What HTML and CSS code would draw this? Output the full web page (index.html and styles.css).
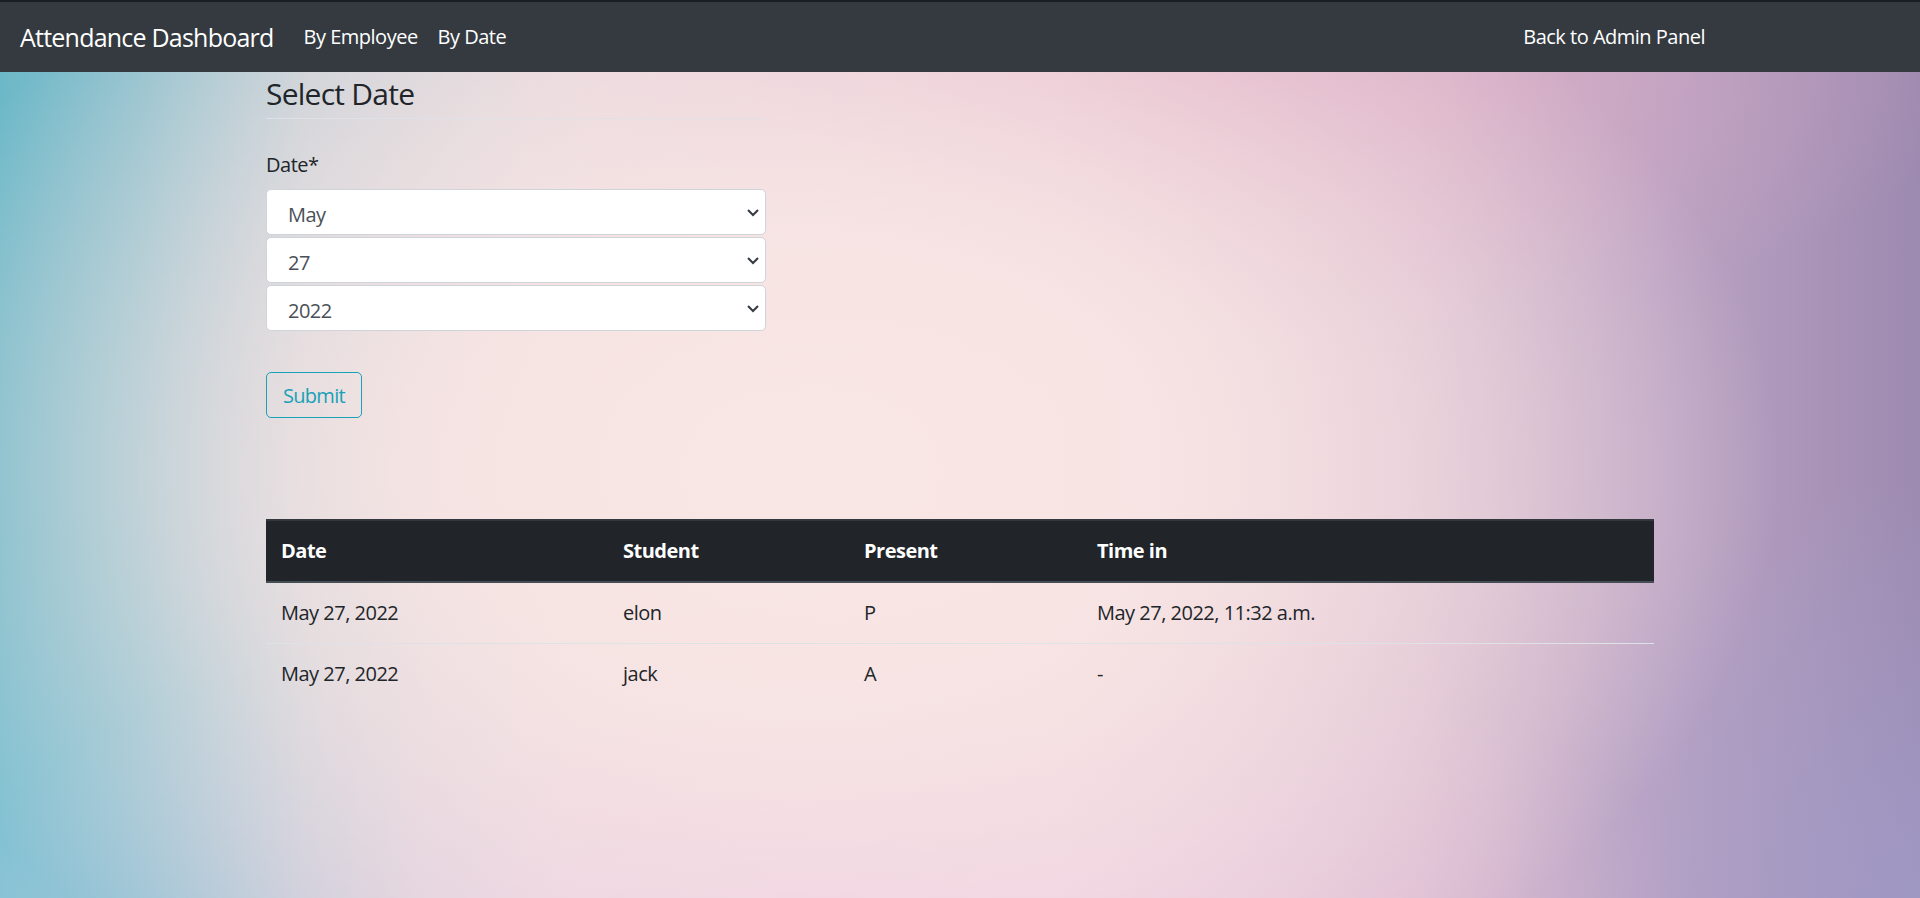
FILE: index.html
```html
<!DOCTYPE html>
<html lang="en">
<head>
<meta charset="utf-8">
<title>Attendance Dashboard</title>
<link rel="stylesheet" href="styles.css">
</head>
<body>
<header class="navbar">
  <a class="brand" href="#">Attendance Dashboard</a>
  <nav class="nav-main">
    <a class="nav-link" href="#">By Employee</a>
    <a class="nav-link" href="#">By Date</a>
  </nav>
  <nav class="nav-right">
    <a class="nav-link" href="#">Back to Admin Panel</a>
  </nav>
</header>

<main class="container">
  <section class="form-col">
    <h4 class="section-title">Select Date</h4>
    <form class="date-form">
      <label class="field-label">Date*</label>
      <div class="select-group">
        <div class="select-wrap">
          <select class="date-select"><option>May</option></select>
          <svg class="chev" width="14" height="10" viewBox="0 0 14 10"><path d="M2 3 L7 8 L12 3" fill="none" stroke="#343a40" stroke-width="2"/></svg>
        </div>
        <div class="select-wrap">
          <select class="date-select"><option>27</option></select>
          <svg class="chev" width="14" height="10" viewBox="0 0 14 10"><path d="M2 3 L7 8 L12 3" fill="none" stroke="#343a40" stroke-width="2"/></svg>
        </div>
        <div class="select-wrap">
          <select class="date-select"><option>2022</option></select>
          <svg class="chev" width="14" height="10" viewBox="0 0 14 10"><path d="M2 3 L7 8 L12 3" fill="none" stroke="#343a40" stroke-width="2"/></svg>
        </div>
      </div>
      <button type="button" class="btn-submit">Submit</button>
    </form>
  </section>

  <table class="att-table">
    <thead>
      <tr>
        <th class="c-date">Date</th>
        <th class="c-student">Student</th>
        <th class="c-present">Present</th>
        <th class="c-time">Time in</th>
      </tr>
    </thead>
    <tbody>
      <tr>
        <td>May 27, 2022</td>
        <td>elon</td>
        <td>P</td>
        <td>May 27, 2022, 11:32 a.m.</td>
      </tr>
      <tr>
        <td>May 27, 2022</td>
        <td>jack</td>
        <td>A</td>
        <td>-</td>
      </tr>
    </tbody>
  </table>
</main>
</body>
</html>
```

FILE: styles.css
```css
* { box-sizing: border-box; }

html, body {
  margin: 0;
  padding: 0;
}

body {
  min-height: 898px;
  font-family: "Open Sans", "Noto Sans", sans-serif;
  font-size: 20px;
  line-height: 1.5;
  letter-spacing: -0.025em;
  color: #212529;
  background:
    radial-gradient(ellipse 980px 640px at 800px 470px, #f9e7e5 0%, rgba(248,229,228,0.92) 38%, rgba(244,224,228,0) 100%),
    radial-gradient(ellipse 760px 280px at 1230px 60px, rgba(222,166,192,0.65), rgba(222,166,192,0) 100%),
    radial-gradient(ellipse 860px 300px at 820px 898px, rgba(238,200,228,0.75), rgba(238,200,228,0) 100%),
    radial-gradient(ellipse 420px 420px at 1920px 898px, rgba(160,158,204,0.7), rgba(160,158,204,0) 100%),
    radial-gradient(ellipse 420px 360px at 0px 898px, rgba(140,198,216,0.8), rgba(140,198,216,0) 100%),
    linear-gradient(90deg, #6cb8c8 0%, #8cc0cd 7%, #c2cfd6 16%, #e3d7dd 30%, #ecd6dd 55%, #d9bccf 74%, #bba3c3 87%, #9d8ab0 100%);
}

a { text-decoration: none; }

/* Navbar */
.navbar {
  display: flex;
  align-items: center;
  height: 72px;
  padding: 0 20px;
  background: #343a40;
  border-top: 2px solid #1a1e23;
}

.brand {
  color: #fff;
  font-size: 25px;
  line-height: 38px;
  letter-spacing: -0.031em;
  margin-right: 20px;
}

.nav-main, .nav-right {
  display: flex;
}

.nav-link {
  color: #fff;
  font-size: 20px;
  padding: 0 10px;
  line-height: 30px;
}

.nav-right {
  margin-left: auto;
  margin-right: 185px;
}

/* Container */
.container {
  width: 1388px;
  margin: 0 auto;
}

.form-col {
  width: 500px;
}

.section-title {
  margin: 4px 0 0;
  padding-bottom: 6px;
  font-size: 30px;
  font-weight: 400;
  line-height: 36px;
  letter-spacing: -0.025em;
  border-bottom: 1px solid #dee2e6;
}

.date-form {
  display: flex;
  flex-direction: column;
  align-items: flex-start;
}

.field-label {
  margin-top: 31px;
  margin-bottom: 9px;
  line-height: 30px;
}

.select-group {
  display: flex;
  flex-direction: column;
  gap: 2px;
  width: 100%;
}

.select-wrap {
  position: relative;
  width: 100%;
}

.date-select {
  display: block;
  width: 100%;
  height: 46px;
  padding: 5px 36px 0 21px;
  font-family: inherit;
  font-size: 20px;
  letter-spacing: -0.025em;
  color: #495057;
  background: #fff;
  border: 1px solid #ced4da;
  border-radius: 5px;
  -webkit-appearance: none;
  appearance: none;
}

.chev {
  position: absolute;
  right: 6px;
  top: 18px;
  pointer-events: none;
}

.btn-submit {
  margin-top: 41px;
  height: 46px;
  padding: 0 16px;
  font-family: inherit;
  font-size: 20px;
  letter-spacing: -0.035em;
  color: #17a2b8;
  background: transparent;
  border: 1px solid #17a2b8;
  border-radius: 5px;
}

/* Table */
.att-table {
  margin-top: 101px;
  width: 1388px;
  border-collapse: collapse;
  table-layout: fixed;
}

.att-table th {
  text-align: left;
  font-weight: 700;
  color: #fff;
  background: #212529;
  padding: 15px;
  line-height: 30px;
  border-top: 2px solid #32383e;
  border-bottom: 2px solid #454d55;
}

.att-table td {
  padding: 15px;
  line-height: 30px;
  vertical-align: top;
}

.att-table tbody tr:first-child td {
  border-bottom: 1px solid #dee2e6;
}

.c-date { width: 342px; }
.c-student { width: 241px; }
.c-present { width: 233px; }
.c-time { width: 572px; }
```
